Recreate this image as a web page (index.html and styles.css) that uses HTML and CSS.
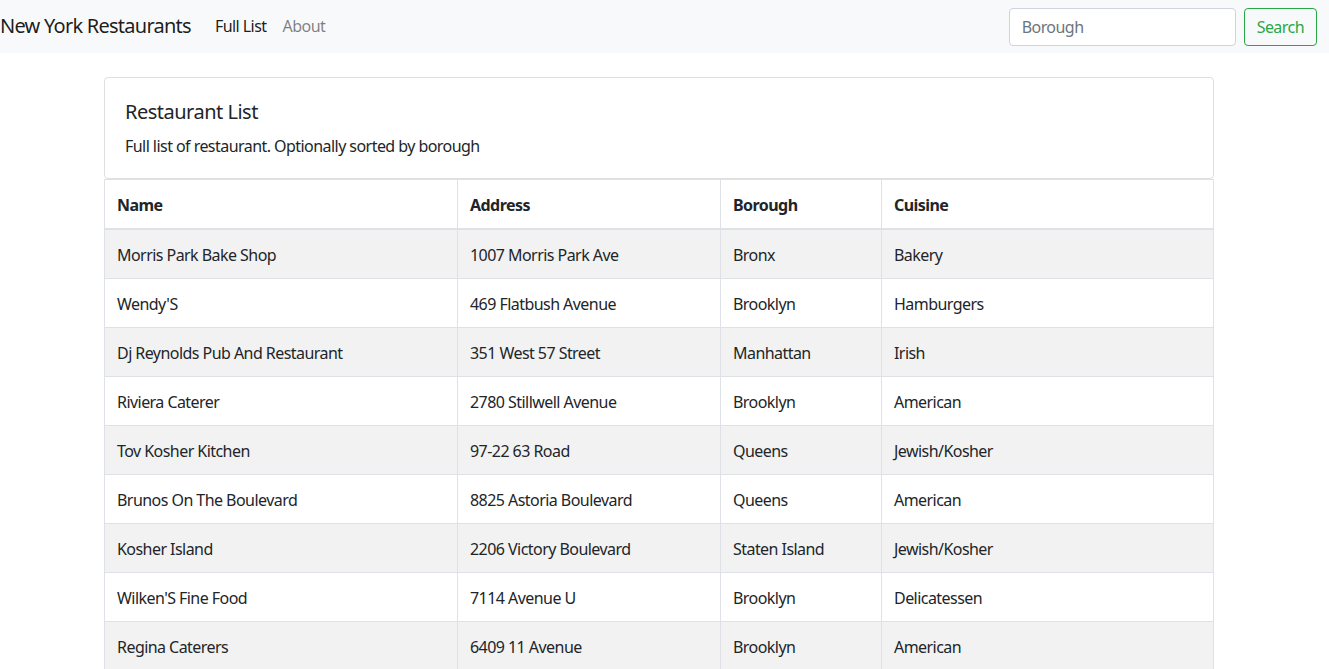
FILE: index.html
```html
<!DOCTYPE html>
<html lang="en">
<head>
<meta charset="utf-8">
<title>New York Restaurants</title>
<link rel="stylesheet" href="styles.css">
</head>
<body>
<nav class="navbar">
  <a class="brand" href="#">New York Restaurants</a>
  <ul class="nav">
    <li><a class="nav-link active" href="#">Full List</a></li>
    <li><a class="nav-link" href="#">About</a></li>
  </ul>
  <form class="search">
    <input class="form-control" type="search" placeholder="Borough">
    <button class="btn-outline" type="button">Search</button>
  </form>
</nav>
<main class="container">
  <div class="card">
    <h5 class="card-title">Restaurant List</h5>
    <p class="card-text">Full list of restaurant. Optionally sorted by borough</p>
  </div>
  <table class="table">
    <colgroup>
      <col class="c-name"><col class="c-addr"><col class="c-boro"><col class="c-cuis">
    </colgroup>
    <thead>
      <tr><th>Name</th><th>Address</th><th>Borough</th><th>Cuisine</th></tr>
    </thead>
    <tbody>
      <tr><td>Morris Park Bake Shop</td><td>1007 Morris Park Ave</td><td>Bronx</td><td>Bakery</td></tr>
      <tr><td>Wendy'S</td><td>469 Flatbush Avenue</td><td>Brooklyn</td><td>Hamburgers</td></tr>
      <tr><td>Dj Reynolds Pub And Restaurant</td><td>351 West 57 Street</td><td>Manhattan</td><td>Irish</td></tr>
      <tr><td>Riviera Caterer</td><td>2780 Stillwell Avenue</td><td>Brooklyn</td><td>American</td></tr>
      <tr><td>Tov Kosher Kitchen</td><td>97-22 63 Road</td><td>Queens</td><td>Jewish/Kosher</td></tr>
      <tr><td>Brunos On The Boulevard</td><td>8825 Astoria Boulevard</td><td>Queens</td><td>American</td></tr>
      <tr><td>Kosher Island</td><td>2206 Victory Boulevard</td><td>Staten Island</td><td>Jewish/Kosher</td></tr>
      <tr><td>Wilken'S Fine Food</td><td>7114 Avenue U</td><td>Brooklyn</td><td>Delicatessen</td></tr>
      <tr><td>Regina Caterers</td><td>6409 11 Avenue</td><td>Brooklyn</td><td>American</td></tr>
    </tbody>
  </table>
</main>
</body>
</html>
```
FILE: styles.css
```css
* { box-sizing: border-box; }
html, body { margin: 0; }
body {
  font-family: "Noto Sans", "Open Sans", sans-serif;
  font-size: 16px;
  line-height: 1.5;
  letter-spacing: -0.55px;
  color: #212529;
  background: #fff;
}
a { text-decoration: none; }

.navbar {
  display: flex;
  align-items: center;
  height: 53px;
  padding: 0 12px 0 0;
  background: #f8f9fa;
}
.brand {
  font-size: 20px;
  line-height: 30px;
  letter-spacing: -0.75px;
  color: rgba(0,0,0,.9);
  margin-right: 16px;
  margin-top: -2px;
  white-space: nowrap;
}
.nav {
  display: flex;
  list-style: none;
  margin: -2px 0 0;
  padding: 0;
  flex: 1;
}
.nav-link {
  display: block;
  padding: 8px;
  color: rgba(0,0,0,.5);
}
.nav-link.active { color: rgba(0,0,0,.9); }
.search {
  display: flex;
  align-items: center;
  gap: 8px;
  margin: 0;
}
.form-control {
  width: 227px;
  height: 38px;
  padding: 6px 12px;
  font: inherit;
  letter-spacing: inherit;
  color: #495057;
  border: 1px solid #ced4da;
  border-radius: 4px;
  background: #fff;
}
.form-control::placeholder { color: #6c757d; }
.btn-outline {
  height: 38px;
  padding: 6px 12px;
  font: inherit;
  letter-spacing: inherit;
  color: #28a745;
  background: transparent;
  border: 1px solid #28a745;
  border-radius: 4px;
}

.container {
  width: 1110px;
  margin: 24px 0 0 104px;
}
.card {
  border: 1px solid rgba(0,0,0,.125);
  border-radius: 4px;
  padding: 20px;
}
.card-title {
  margin: 0 0 12px;
  padding-top: 3px;
  font-size: 20px;
  font-weight: 400;
  line-height: 22px;
  letter-spacing: -0.5px;
}
.card-text { margin: 0; padding-top: 0; line-height: 23px; }

.table {
  width: 100%;
  border-collapse: collapse;
  color: #212529;
}
.c-name { width: 353px; }
.c-addr { width: 263px; }
.c-boro { width: 161px; }
.table th, .table td {
  padding: 13px 12px 11px;
  text-align: left;
  vertical-align: top;
  border: 1px solid #dee2e6;
}
.table th { font-weight: 700; }
.table thead th { border-bottom-width: 2px; }
.table tbody tr:nth-child(odd) { background: rgba(0,0,0,.05); }
```
